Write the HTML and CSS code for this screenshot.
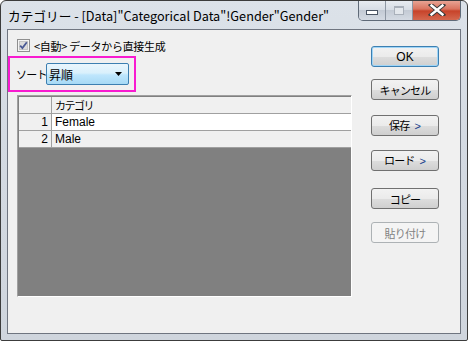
FILE: index.html
```html
<!DOCTYPE html>
<html lang="ja">
<head>
    <meta charset="UTF-8">
    <title>カテゴリー</title>
    <link rel="stylesheet" href="styles.css">
</head>
<body>
    <div class="window">
        <div class="titlebar">
            <span class="title">カテゴリー - [Data]"Categorical Data"!Gender"Gender"</span>
            <div class="caption-buttons">
                <div class="cap cap-min"><span class="min-glyph"></span></div>
                <div class="cap cap-max"><span class="max-glyph"></span></div>
                <div class="cap cap-close">
                    <svg width="18" height="12" viewBox="0 0 18 12">
                        <path d="M3 1 L15 11 M15 1 L3 11" stroke="#3b3b3b" stroke-width="4.4" stroke-linecap="square"/>
                        <path d="M3.5 1.5 L14.5 10.5 M14.5 1.5 L3.5 10.5" stroke="#fff" stroke-width="2.4" stroke-linecap="square"/>
                    </svg>
                </div>
            </div>
        </div>

        <div class="client">
            <div class="left-col">
                <label class="auto-row">
                    <span class="checkbox">
                        <svg width="13" height="13" viewBox="0 0 13 13">
                            <rect x="0.5" y="0.5" width="12" height="12" fill="#f4f4f4" stroke="#8f8f8f"/>
                            <rect x="2.5" y="2.5" width="8" height="8" fill="#dcdcdc" stroke="#c4c4c4"/>
                            <path d="M3.2 6.6 L5.4 9 L9.8 3.2" fill="none" stroke="#4a5a94" stroke-width="1.8"/>
                        </svg>
                    </span>
                    <span>&lt;自動&gt; データから直接生成</span>
                </label>

                <div class="sort-box">
                    <span class="sort-label">ソート</span>
                    <div class="combo">
                        <span>昇順</span>
                        <svg class="combo-arrow" width="8" height="4" viewBox="0 0 8 4">
                            <path d="M0 0 H7 L3.5 4 Z" fill="#000"/>
                        </svg>
                    </div>
                </div>

                <div class="grid">
                    <div class="grid-row header">
                        <div class="row-head"></div>
                        <div class="cell">カテゴリ</div>
                    </div>
                    <div class="grid-row">
                        <div class="row-head">1</div>
                        <div class="cell white">Female</div>
                    </div>
                    <div class="grid-row">
                        <div class="row-head">2</div>
                        <div class="cell">Male</div>
                    </div>
                </div>
            </div>

            <div class="right-col">
                <button class="btn btn-default">OK</button>
                <button class="btn btn-cancel">キャンセル</button>
                <button class="btn btn-save">保存<span class="gt">&gt;</span></button>
                <button class="btn btn-load">ロード<span class="gt">&gt;</span></button>
                <button class="btn btn-copy">コピー</button>
                <button class="btn btn-paste" disabled>貼り付け</button>
            </div>
        </div>
    </div>
</body>
</html>
```

FILE: styles.css
```css
body {
    margin: 0;
    font-family: "Liberation Sans", "Noto Sans CJK JP", sans-serif;
    font-size: 12px;
    color: #000;
    background-color: #fff;
}
.window {
    width: 468px;
    height: 341px;
    box-sizing: border-box;
    border: 1px solid #3c3c3c;
    border-radius: 6px 6px 2px 2px;
    background: linear-gradient(to bottom, #dce2e9 0%, #d4dae2 40%, #cfd5dd 100%);
    display: flex;
    flex-direction: column;
    overflow: hidden;
}
.titlebar {
    height: 28px;
    display: flex;
    justify-content: space-between;
    align-items: flex-start;
}
.title {
    margin: 6px 0 0 7px;
    font-family: "Noto Sans CJK JP", sans-serif;
    font-size: 12.7px;
    line-height: 18px;
    color: #000;
    white-space: nowrap;
}
.caption-buttons {
    display: flex;
    margin: -1px 6px 0 0;
    height: 20px;
    border: 1px solid #5f6a78;
    border-top: none;
    border-radius: 0 0 5px 5px;
    overflow: hidden;
}
.cap {
    display: flex;
    align-items: center;
    justify-content: center;
    box-sizing: border-box;
}
.cap-min,
.cap-max {
    width: 27px;
    background: linear-gradient(to bottom, #e9edf2 0%, #d6dce4 50%, #c3cad4 51%, #d4dae3 100%);
    border-right: 1px solid #8e97a3;
}
.cap-close {
    width: 47px;
    background: linear-gradient(to bottom, #e9a99a 0%, #d9745f 45%, #c7432a 55%, #d4684f 100%);
}
.min-glyph {
    width: 10px;
    height: 3px;
    margin-top: 5px;
    background: #fff;
    border: 1px solid #4b5564;
}
.max-glyph {
    width: 8px;
    height: 6px;
    border: 1px solid #a9b0ba;
    border-top-width: 2px;
    background: #e3e7ec;
}
.client {
    flex: 1;
    margin: 0 6px 6px 6px;
    border: 1px solid #6f7580;
    background-color: #f0f0f0;
    display: flex;
}
.left-col {
    width: 344px;
    display: flex;
    flex-direction: column;
}
.auto-row {
    display: flex;
    align-items: center;
    gap: 4px;
    margin: 9px 0 0 9px;
    height: 13px;
    font-family: "Noto Sans CJK JP", sans-serif;
    font-size: 11px;
    letter-spacing: -0.3px;
    white-space: nowrap;
}
.checkbox {
    display: flex;
    width: 13px;
    height: 13px;
}
.sort-box {
    margin-top: 4px;
    width: 128px;
    height: 36px;
    box-sizing: border-box;
    border: 2px solid #f81bd0;
    display: flex;
    align-items: center;
    padding-left: 6px;
}
.sort-label {
    font-family: "Noto Sans CJK JP", sans-serif;
    font-size: 11px;
    letter-spacing: -0.8px;
    white-space: nowrap;
    width: 30px;
}
.combo {
    width: 83px;
    height: 22px;
    box-sizing: border-box;
    border: 1px solid #3c7fb1;
    border-radius: 2px;
    background: linear-gradient(to bottom, #eaf6fd 0%, #d9f0fc 45%, #bee6fd 55%, #a7d9f5 100%);
    display: flex;
    align-items: center;
    justify-content: space-between;
    padding: 0 5px 0 2px;
    font-family: "Noto Sans CJK JP", sans-serif;
    font-size: 12px;
}
.grid {
    margin: 3px 0 0 9px;
    width: 335px;
    height: 202px;
    box-sizing: border-box;
    border: 1px solid #a0a0a0;
    border-right-color: #fff;
    border-bottom-color: #fff;
    background-color: #808080;
    padding: 1px 0 0 1px;
}
.grid-row {
    display: flex;
    height: 17px;
    box-sizing: border-box;
    border-bottom: 1px solid #a0a0a0;
}
.row-head {
    width: 33px;
    box-sizing: border-box;
    border-right: 1px solid #a0a0a0;
    background-color: #f0f0f0;
    text-align: right;
    padding-right: 3px;
    line-height: 16px;
}
.cell {
    flex: 1;
    background-color: #f0f0f0;
    padding-left: 3px;
    line-height: 16px;
}
.header .cell {
    font-family: "Noto Sans CJK JP", sans-serif;
    font-size: 11px;
    letter-spacing: -1.5px;
}
.cell.white {
    background-color: #fff;
}
.right-col {
    margin-left: 19px;
    padding-top: 16px;
    display: flex;
    flex-direction: column;
}
.btn {
    width: 68px;
    height: 21px;
    padding: 0;
    border: 1px solid #707070;
    border-radius: 3px;
    background: linear-gradient(to bottom, #f2f2f2 0%, #ebebeb 50%, #dddddd 51%, #cfcfcf 100%);
    font-family: "Noto Sans CJK JP", sans-serif;
    font-size: 11px;
    letter-spacing: -0.8px;
    color: #000;
    line-height: 18px;
    white-space: nowrap;
}
.btn-default {
    border-color: #3c7fb1;
    box-shadow: inset 0 0 0 1px #9fd5f7;
    font-family: "Liberation Sans", sans-serif;
    font-size: 12px;
    letter-spacing: 0;
}
.btn-cancel {
    margin-top: 12px;
}
.btn-save {
    margin-top: 15px;
}
.btn-load {
    margin-top: 14px;
}
.btn-copy {
    margin-top: 17px;
}
.btn-paste {
    margin-top: 13px;
    border-color: #adb2b5;
    background: #f4f4f4;
    color: #838383;
}
.gt {
    margin-left: 5px;
    font-family: "Liberation Sans", sans-serif;
    color: #1a3c8c;
    letter-spacing: 0;
}
```
